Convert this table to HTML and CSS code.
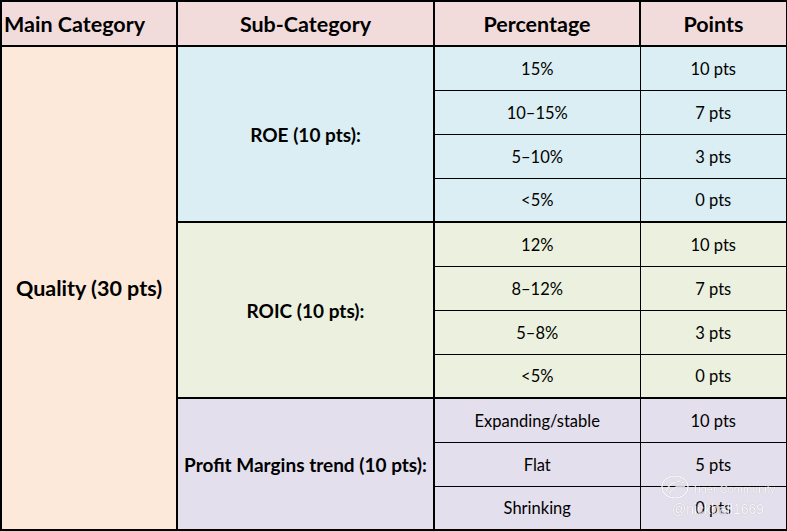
FILE: index.html
```html
<!DOCTYPE html>
<html>
<head>
<meta charset="utf-8">
<link rel="stylesheet" href="styles.css">
</head>
<body>
<div class="wrap">
<table class="score">
  <colgroup>
    <col class="c1"><col class="c2"><col class="c3"><col class="c4">
  </colgroup>
  <thead>
    <tr class="head">
      <th class="left">Main Category</th>
      <th>Sub-Category</th>
      <th>Percentage</th>
      <th>Points</th>
    </tr>
  </thead>
  <tbody>
    <tr>
      <td class="main" rowspan="11">Quality (30 pts)</td>
      <td class="sub roe" rowspan="4">ROE (10 pts):</td>
      <td class="roe">15%</td><td class="roe">10 pts</td>
    </tr>
    <tr><td class="roe">10–15%</td><td class="roe">7 pts</td></tr>
    <tr><td class="roe">5–10%</td><td class="roe">3 pts</td></tr>
    <tr class="end"><td class="roe">&lt;5%</td><td class="roe">0 pts</td></tr>
    <tr>
      <td class="sub roic" rowspan="4">ROIC (10 pts):</td>
      <td class="roic">12%</td><td class="roic">10 pts</td>
    </tr>
    <tr><td class="roic">8–12%</td><td class="roic">7 pts</td></tr>
    <tr><td class="roic">5–8%</td><td class="roic">3 pts</td></tr>
    <tr class="end"><td class="roic">&lt;5%</td><td class="roic">0 pts</td></tr>
    <tr>
      <td class="sub pm" rowspan="3">Profit Margins trend (10 pts):</td>
      <td class="pm">Expanding/stable</td><td class="pm">10 pts</td>
    </tr>
    <tr><td class="pm">Flat</td><td class="pm">5 pts</td></tr>
    <tr class="last"><td class="pm">Shrinking</td><td class="pm">0 pts</td></tr>
  </tbody>
</table>
<div class="mark">
  <div class="mark-top">
    <svg class="logo" width="30" height="26" viewBox="0 0 30 26">
      <ellipse cx="15" cy="13" rx="13" ry="11" fill="none" stroke="#fff" stroke-width="1.6"/>
      <path d="M6 17 C10 8, 18 6, 24 9 M9 20 C13 13, 19 11, 25 13" fill="none" stroke="#fff" stroke-width="1.4"/>
    </svg>
    <span class="mark-name">Tiger Community</span>
  </div>
  <div class="mark-user">@nickball1669</div>
</div>
</div>
</body>
</html>
```
FILE: styles.css
```css
html, body {
  margin: 0;
  padding: 0;
  background: #ffffff;
}
.wrap {
  position: relative;
  width: 787px;
  height: 531px;
}
.score {
  border-collapse: collapse;
  table-layout: fixed;
  width: 786px;
  font-family: Lato, "Open Sans", sans-serif;
  color: #000;
}
.c1 { width: 176px; }
.c2 { width: 257px; }
.c3 { width: 206px; }
.c4 { width: 147px; }
.score th, .score td {
  border: 1px solid #000;
  padding: 0;
  text-align: center;
  vertical-align: middle;
}
.head th {
  background: #f2dcdb;
  height: 43px;
  font-size: 21.5px;
  font-weight: bold;
  border: 2px solid #000;
}
.head th.left {
  text-align: left;
  padding-left: 2px;
}
.score td {
  height: 43px;
  font-size: 16.5px;
}
.score tr.end td,
.score tr.last td {
  height: 42px;
}
.score td.main {
  background: #fde9d9;
  font-size: 21.5px;
  font-weight: bold;
  border: 2px solid #000;
}
.score td.sub {
  font-size: 19px;
  font-weight: bold;
  border: 2px solid #000;
}
.score tr.end td {
  border-bottom: 2px solid #000;
}
.score td.roe { background: #daeef3; }
.score td.roic { background: #ebf1de; }
.score td.pm { background: #e4dfec; }
.score tr.last td, .score td.main, .score td.pm.sub {
  border-bottom: 2px solid #000;
}
.score tr td:last-child {
  border-right: 2px solid #000;
}
.mark {
  position: absolute;
  left: 660px;
  top: 474px;
  font-family: "Liberation Sans", sans-serif;
  color: #fff;
  opacity: 0.75;
  text-shadow: 0 0 1px #9a9a9a;
}
.mark-top {
  display: flex;
  align-items: center;
  gap: 2px;
}
.logo {
  filter: drop-shadow(0 0 0.6px #888);
}
.mark-name {
  font-size: 11px;
  margin-top: 4px;
}
.mark-user {
  font-size: 14px;
  margin-left: 12px;
  margin-top: 1px;
}
```
